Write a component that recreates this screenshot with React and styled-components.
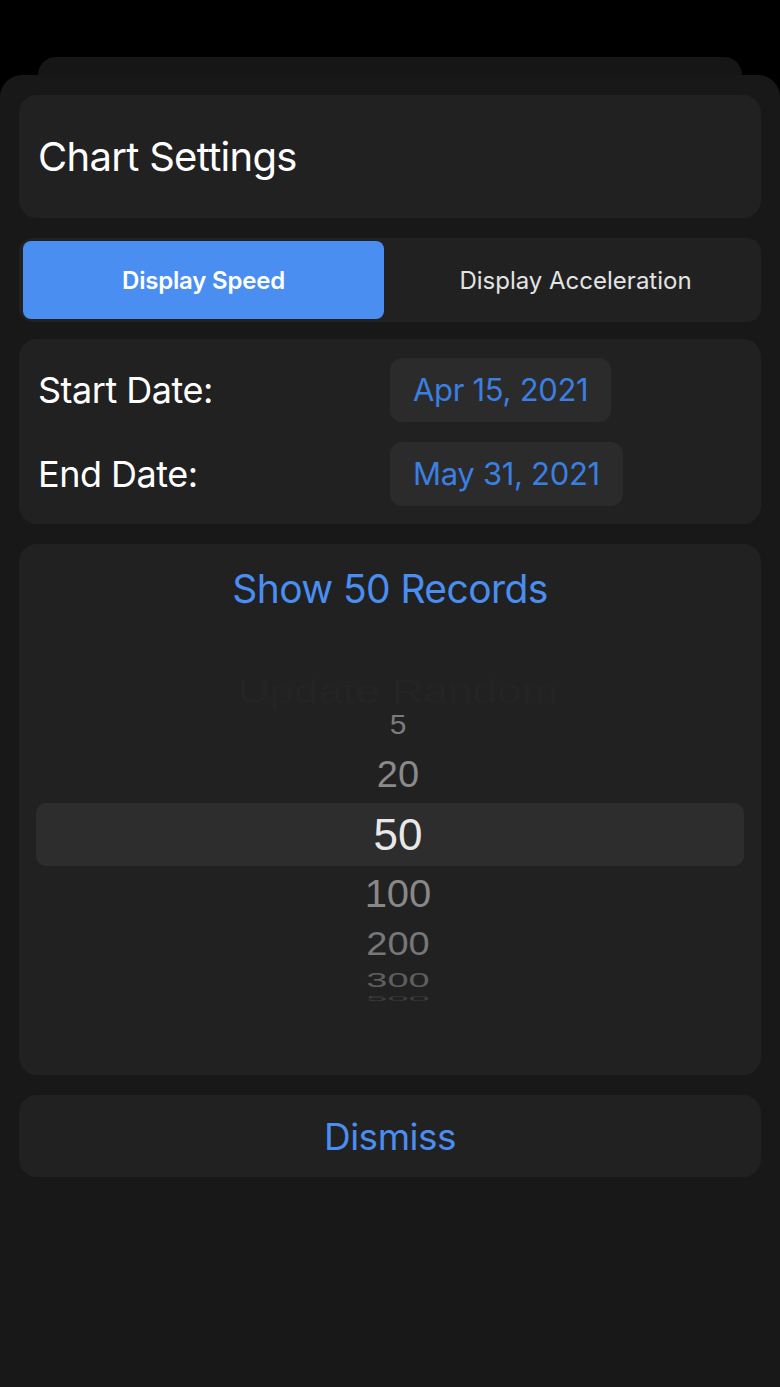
import React from 'react';
import styled, { createGlobalStyle } from 'styled-components';

const GlobalStyle = createGlobalStyle`
  html, body {
    margin: 0;
    padding: 0;
    background: #000;
  }
  body {
    font-family: Inter, "Noto Sans", "Liberation Sans", sans-serif;
    -webkit-font-smoothing: antialiased;
  }
`;

const Screen = styled.div`
  width: 780px;
  height: 1387px;
  background: #000;
  padding-top: 57px;
  box-sizing: border-box;
  display: flex;
  flex-direction: column;
  overflow: hidden;
`;

const BackSheet = styled.div`
  height: 18px;
  margin: 0 38px;
  background: #161616;
  border-radius: 22px 22px 0 0;
  flex-shrink: 0;
`;

const Sheet = styled.div`
  flex: 1;
  background: #181818;
  border-radius: 22px 22px 0 0;
  padding: 20px 19px;
  display: flex;
  flex-direction: column;
  gap: 20px;
`;

const Card = styled.div`
  background: #212121;
  border-radius: 18px;
  height: ${p => p.h}px;
  flex-shrink: 0;
  box-sizing: border-box;
`;

const TitleCard = styled(Card)`
  display: flex;
  align-items: center;
  padding-left: 19px;
`;

const Title = styled.h1`
  margin: 0;
  font-size: 40px;
  font-weight: 400;
  color: #fff;
  letter-spacing: -0.7px;
`;

const Segmented = styled(Card)`
  display: grid;
  grid-template-columns: 361px 1fr;
  padding: 3px 4px;
  border-radius: 14px;
  margin-bottom: -3px;
`;

const Segment = styled.button`
  border: none;
  border-radius: 8px;
  font-family: inherit;
  font-size: 24px;
  letter-spacing: ${p => (p.active ? '-0.2px' : '0px')};
  background: ${p => (p.active ? '#4a8ef2' : 'transparent')};
  color: ${p => (p.active ? '#fff' : '#e4e4e4')};
  font-weight: ${p => (p.active ? 600 : 400)};
  padding: 0 0 0 ${p => (p.active ? 0 : 10)}px;
`;

const DatesCard = styled(Card)`
  display: flex;
  flex-direction: column;
  justify-content: center;
  gap: 20px;
  padding: 0 19px;
`;

const DateRow = styled.div`
  display: grid;
  grid-template-columns: 352px auto;
  align-items: center;
`;

const Label = styled.span`
  font-size: 36px;
  color: #fff;
  letter-spacing: -0.5px;
`;

const DatePill = styled.span`
  justify-self: start;
  height: 64px;
  display: flex;
  align-items: center;
  padding: 0 ${p => p.pad}px;
  background: #2b2b2b;
  border-radius: 12px;
  color: #3b7fe0;
  font-size: 31px;
  letter-spacing: -0.3px;
`;

const PickerCard = styled(Card)`
  display: flex;
  flex-direction: column;
  padding: 0 17px;
`;

const PickerTitle = styled.div`
  height: 88px;
  display: flex;
  align-items: center;
  justify-content: center;
  font-size: 39px;
  color: #4a8ef2;
  letter-spacing: -0.6px;
`;

const Wheel = styled.div`
  margin-top: 47px;
  display: flex;
  flex-direction: column;
`;

const WheelItem = styled.div`
  height: ${p => p.h}px;
  display: flex;
  align-items: center;
  justify-content: center;
  padding-left: 16px;
  border-radius: 10px;
  background: ${p => (p.selected ? '#2d2d2d' : 'transparent')};
  color: ${p => p.color};
  font-family: "Liberation Sans", Arial, sans-serif;
  font-size: ${p => p.size}px;
  line-height: 1;
  overflow: visible;
  span {
    display: inline-block;
    white-space: nowrap;
    transform: scaleY(${p => p.squash});
  }
`;

const DismissCard = styled(Card)`
  display: flex;
  align-items: center;
  justify-content: center;
  font-size: 37px;
  color: #4a8ef2;
  letter-spacing: -0.5px;
`;

const wheelItems = [
  { label: 'Update Random', h: 25, size: 44, color: '#242424', squash: 0.75 },
  { label: '5', h: 40, size: 30, color: '#7c7c7c', squash: 0.95 },
  { label: '20', h: 59, size: 38, color: '#8a8a8a', squash: 0.97 },
  { label: '50', h: 63, size: 44, color: '#e8e8e8', squash: 1, selected: true },
  { label: '100', h: 54, size: 40, color: '#888', squash: 0.98 },
  { label: '200', h: 48, size: 38, color: '#777', squash: 0.85 },
  { label: '300', h: 24, size: 38, color: '#5e5e5e', squash: 0.55 },
  { label: '500', h: 14, size: 38, color: '#3c3c3c', squash: 0.18 },
];

export default function App() {
  return (
    <>
      <GlobalStyle />
      <Screen>
        <BackSheet />
        <Sheet>
          <TitleCard h={123}>
            <Title>Chart Settings</Title>
          </TitleCard>

          <Segmented h={84}>
            <Segment active>Display Speed</Segment>
            <Segment>Display Acceleration</Segment>
          </Segmented>

          <DatesCard h={185}>
            <DateRow>
              <Label>Start Date:</Label>
              <DatePill pad={23}>Apr 15, 2021</DatePill>
            </DateRow>
            <DateRow>
              <Label>End Date:</Label>
              <DatePill pad={23}>May 31, 2021</DatePill>
            </DateRow>
          </DatesCard>

          <PickerCard h={531}>
            <PickerTitle>Show 50 Records</PickerTitle>
            <Wheel>
              {wheelItems.map(item => (
                <WheelItem
                  key={item.label}
                  h={item.h}
                  size={item.size}
                  color={item.color}
                  squash={item.squash}
                  selected={item.selected}
                >
                  <span>{item.label}</span>
                </WheelItem>
              ))}
            </Wheel>
          </PickerCard>

          <DismissCard h={82}>Dismiss</DismissCard>
        </Sheet>
      </Screen>
    </>
  );
}
